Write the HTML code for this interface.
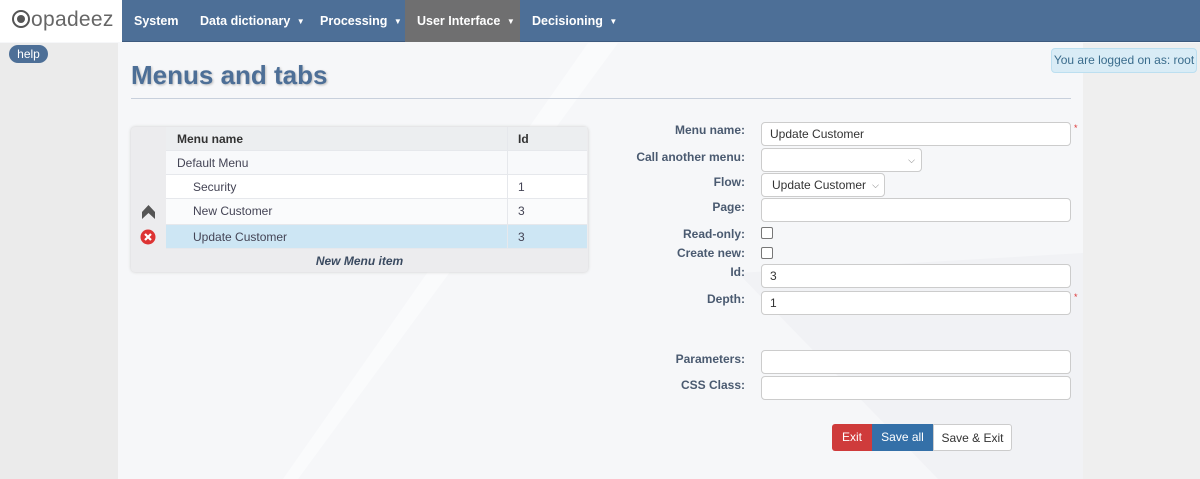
<!DOCTYPE html>
<html><head><style>
*{box-sizing:border-box;margin:0;padding:0}
body{width:1200px;height:479px;overflow:hidden;font-family:"Liberation Sans",sans-serif;background:#f6f7f9;position:relative;font-size:12px;color:#333}
.nav{position:absolute;left:0;top:0;width:1200px;height:42px;background:#4d6f97;border-bottom:1px solid #3d5a7e}
.logo{position:absolute;left:0;top:0;width:122px;height:42px;background:#fff;font-size:21px;color:#666;padding:8px 0 0 12px;letter-spacing:0.3px}
.logo b{display:inline-block;width:18px;height:18px;border-radius:50%;border:2px solid #555;position:relative;top:2px;margin-right:1px}
.logo b:after{content:"";position:absolute;left:3px;top:3px;width:8px;height:8px;border-radius:50%;background:#555}
.ni{position:absolute;top:0;height:42px;line-height:42px;color:#fff;font-weight:bold;font-size:12.5px}
.ni i{font-style:normal;font-size:8px;margin-left:3px;position:relative;top:-1px}
.left{position:absolute;left:0;top:43px;width:118px;height:436px;background:#ebebeb}
.right{position:absolute;left:1083px;top:43px;width:117px;height:436px;background:#efefef}
.help{position:absolute;left:9px;top:45px;width:39px;height:18px;border-radius:9px;background:#4d6f97;color:#fff;font-size:12px;text-align:center;line-height:18px}
.logged{position:absolute;left:1051px;top:48px;width:146px;height:25px;background:#d9ecf6;border:1px solid #bcdff0;border-radius:4px;color:#3a6c8c;font-size:12px;line-height:23px;text-align:center}
h1{position:absolute;left:131px;top:60px;font-size:26px;color:#4d6f97;text-shadow:1px 1px 2px #bbb}
.hr{position:absolute;left:131px;top:98px;width:940px;height:1px;background:#c8d0dc}
.tbl{position:absolute;left:131px;top:127px;width:457px;height:145px;background:#ececee;border-radius:4px;box-shadow:0 0 3px #ccc}
.row{position:absolute;left:35px;width:421px;height:24px;line-height:24px;border-bottom:1px solid #e6e8ec;background:#fff;font-size:12px;color:#445}
.row span{position:absolute;left:341px;top:0;height:24px;border-left:1px solid #e6e8ec;padding-left:10px;width:80px}
.lab{position:absolute;width:110px;text-align:right;left:635px;font-weight:bold;color:#4a5a70;font-size:12px}
.inp{position:absolute;left:761px;height:24px;background:#fff;border:1px solid #ccc;border-radius:4px;font-size:12px;line-height:22px;padding-left:8px;color:#333}
.cb{position:absolute;left:761px;width:12px;height:12px;border:1px solid #777;border-radius:2px;background:#fff}
.star{position:absolute;left:1074px;color:#d33;font-size:9px}
.btn{position:absolute;top:424px;height:27px;line-height:27px;text-align:center;font-size:12px}
</style></head><body>
<svg style="position:absolute;left:118px;top:43px" width="965" height="436"><polygon points="470,0 500,0 180,436 165,436" fill="#fafbfc"/><polygon points="620,230 965,210 965,436 820,436" fill="#f1f2f5"/></svg>
<div class="nav"></div>
<div class="logo"><b></b>opadeez</div>
<div class="ni" style="left:134px">System</div>
<div class="ni" style="left:200px">Data dictionary <i>▼</i></div>
<div class="ni" style="left:320px">Processing <i>▼</i></div>
<div class="ni" style="left:405px;width:115px;background:#6f6f70;padding-left:12px">User Interface <i>▼</i></div>
<div class="ni" style="left:532px">Decisioning <i>▼</i></div>
<div class="left"></div><div class="right"></div>
<div class="help">help</div>
<div class="logged">You are logged on as: root</div>
<h1>Menus and tabs</h1>
<div class="hr"></div>
<div class="tbl">
<div class="row" style="top:0;background:#eceef0;font-weight:bold;color:#333;padding-left:11px">Menu name<span>Id</span></div>
<div class="row" style="top:24px;padding-left:11px;background:#f8f9fb">Default Menu<span></span></div>
<div class="row" style="top:48px;padding-left:27px">Security<span>1</span></div>
<div class="row" style="top:72px;padding-left:27px;background:#fafbfc;height:26px;line-height:24px">New Customer<span style="height:26px">3</span></div>
<div class="row" style="top:98px;padding-left:27px;background:#cde6f4;height:24px">Update Customer<span>3</span></div>
<div style="position:absolute;left:0;top:127px;width:457px;text-align:center;font-weight:bold;font-style:italic;color:#3a4a60">New Menu item</div>
<svg style="position:absolute;left:10px;top:77px" width="15" height="16"><path d="M7.5 1 L14 8 L14 15 L7.5 9 L1 15 L1 8Z" fill="#555"/></svg>
<svg style="position:absolute;left:9px;top:102px" width="16" height="16"><circle cx="8" cy="8" r="7.5" fill="#d33"/><path d="M5 5L11 11M11 5L5 11" stroke="#fff" stroke-width="2.2"/></svg>
</div>
<div class="lab" style="top:123px">Menu name:</div><div class="inp" style="top:122px;width:310px">Update Customer</div><div class="star" style="top:123px">*</div>
<div class="lab" style="top:150px">Call another menu:</div><div class="inp" style="top:148px;width:161px"><span style="position:absolute;right:6px;font-size:9px;color:#777">⌵</span></div>
<div class="lab" style="top:175px">Flow:</div><div class="inp" style="top:173px;width:124px;padding-left:10px">Update Customer <span style="position:absolute;right:5px;font-size:9px;color:#777">⌵</span></div>
<div class="lab" style="top:200px">Page:</div><div class="inp" style="top:198px;width:310px"></div>
<div class="lab" style="top:227px">Read-only:</div><div class="cb" style="top:227px"></div>
<div class="lab" style="top:246px">Create new:</div><div class="cb" style="top:247px"></div>
<div class="lab" style="top:265px">Id:</div><div class="inp" style="top:264px;width:310px">3</div>
<div class="lab" style="top:292px">Depth:</div><div class="inp" style="top:291px;width:310px">1</div><div class="star" style="top:292px">*</div>
<div class="lab" style="top:352px">Parameters:</div><div class="inp" style="top:350px;width:310px"></div>
<div class="lab" style="top:378px">CSS Class:</div><div class="inp" style="top:376px;width:310px"></div>
<div class="btn" style="left:832px;width:40px;background:#cf3b3b;color:#fff;border-radius:3px 0 0 3px">Exit</div>
<div class="btn" style="left:872px;width:61px;background:#3470a8;color:#fff">Save all</div>
<div class="btn" style="left:933px;width:79px;background:#fff;border:1px solid #ccc;border-radius:0 3px 3px 0;color:#333">Save &amp; Exit</div>
</body></html>
